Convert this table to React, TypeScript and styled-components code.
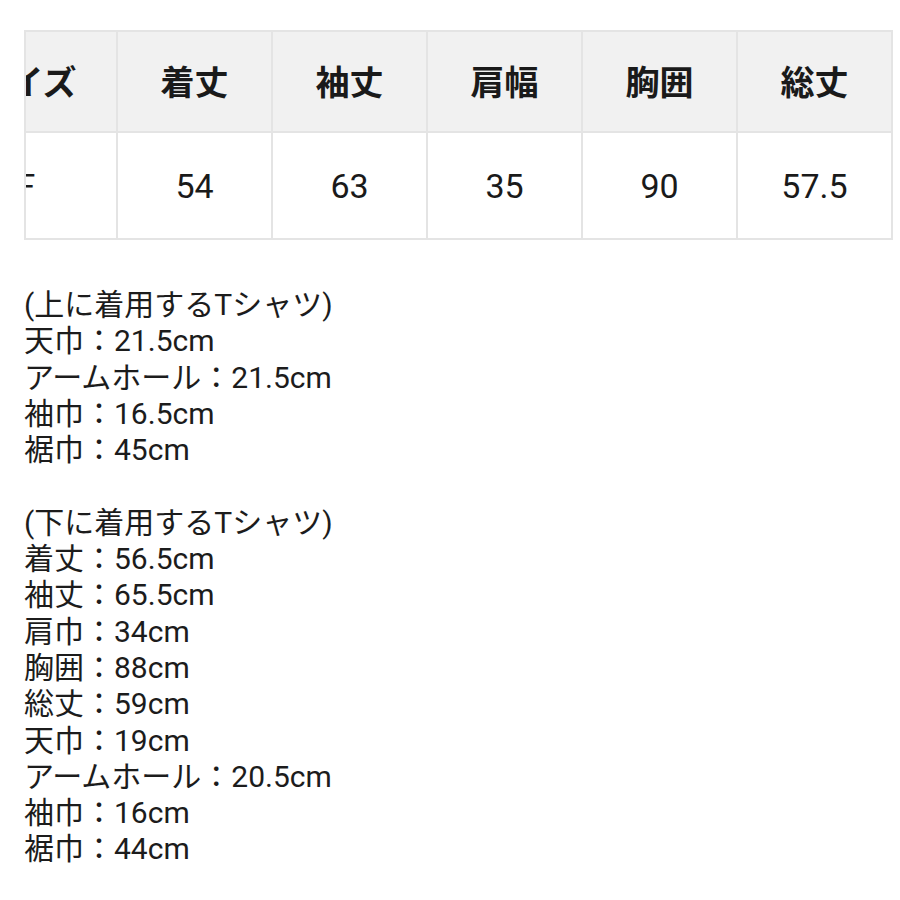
import React, { useEffect, useRef } from "react";
import styled, { createGlobalStyle } from "styled-components";

const GlobalStyle = createGlobalStyle`
  html, body {
    margin: 0;
    padding: 0;
    background: #ffffff;
  }
  body {
    font-family: Roboto, "Noto Sans CJK JP", sans-serif;
    color: #1c1c1c;
  }
`;

const headers = ["サイズ", "着丈", "袖丈", "肩幅", "胸囲", "総丈"];
const values = ["F", "54", "63", "35", "90", "57.5"];

const upperShirt = [
  "(上に着用するTシャツ)",
  "天巾：21.5cm",
  "アームホール：21.5cm",
  "袖巾：16.5cm",
  "裾巾：45cm",
];

const lowerShirt = [
  "(下に着用するTシャツ)",
  "着丈：56.5cm",
  "袖丈：65.5cm",
  "肩巾：34cm",
  "胸囲：88cm",
  "総丈：59cm",
  "天巾：19cm",
  "アームホール：20.5cm",
  "袖巾：16cm",
  "裾巾：44cm",
];

const Page = styled.main`
  padding: 30px 0 40px 24px;
`;

// the table is wider than the screen and sits scrolled to its right end
const TableScroll = styled.div`
  width: 869px;
  overflow-x: auto;
  border-left: 2px solid #e4e4e4;
  box-sizing: border-box;
  scrollbar-width: none;

  &::-webkit-scrollbar {
    display: none;
  }
`;

const SizeTable = styled.table`
  border-collapse: collapse;
  table-layout: fixed;
  width: 957px;
`;

const Cell = styled.td<{ $head?: boolean; $first?: boolean }>`
  width: ${({ $first }) => ($first ? "180px" : "153px")};
  height: ${({ $head }) => ($head ? "97px" : "105px")};
  padding: 0 0 ${({ $head }) => ($head ? "2px" : "0")};
  border: 2px solid #e4e4e4;
  background: ${({ $head }) => ($head ? "#f1f1f1" : "#ffffff")};
  text-align: center;
  vertical-align: middle;
  font-size: 34px;
  font-weight: ${({ $head }) => ($head ? 700 : 400)};
  color: #1a1a1a;
  white-space: nowrap;
`;

const Notes = styled.section`
  margin-top: 47px;
  font-size: 30px;
  line-height: 36.3px;
  color: #1c1c1c;
`;

const NoteGroup = styled.div`
  & + & {
    margin-top: 36.3px;
  }
`;

const NoteLine = styled.div`
  white-space: nowrap;
`;

export default function App() {
  const scrollRef = useRef<HTMLDivElement>(null);

  useEffect(() => {
    const el = scrollRef.current;
    if (el) el.scrollLeft = el.scrollWidth;
  }, []);

  return (
    <>
      <GlobalStyle />
      <Page>
        <TableScroll ref={scrollRef}>
          <SizeTable>
            <tbody>
              <tr>
                {headers.map((h, i) => (
                  <Cell as="th" key={h} $head $first={i === 0}>
                    {h}
                  </Cell>
                ))}
              </tr>
              <tr>
                {values.map((v, i) => (
                  <Cell key={i} $first={i === 0}>
                    {v}
                  </Cell>
                ))}
              </tr>
            </tbody>
          </SizeTable>
        </TableScroll>

        <Notes>
          <NoteGroup>
            {upperShirt.map((line) => (
              <NoteLine key={line}>{line}</NoteLine>
            ))}
          </NoteGroup>
          <NoteGroup>
            {lowerShirt.map((line) => (
              <NoteLine key={line}>{line}</NoteLine>
            ))}
          </NoteGroup>
        </Notes>
      </Page>
    </>
  );
}
